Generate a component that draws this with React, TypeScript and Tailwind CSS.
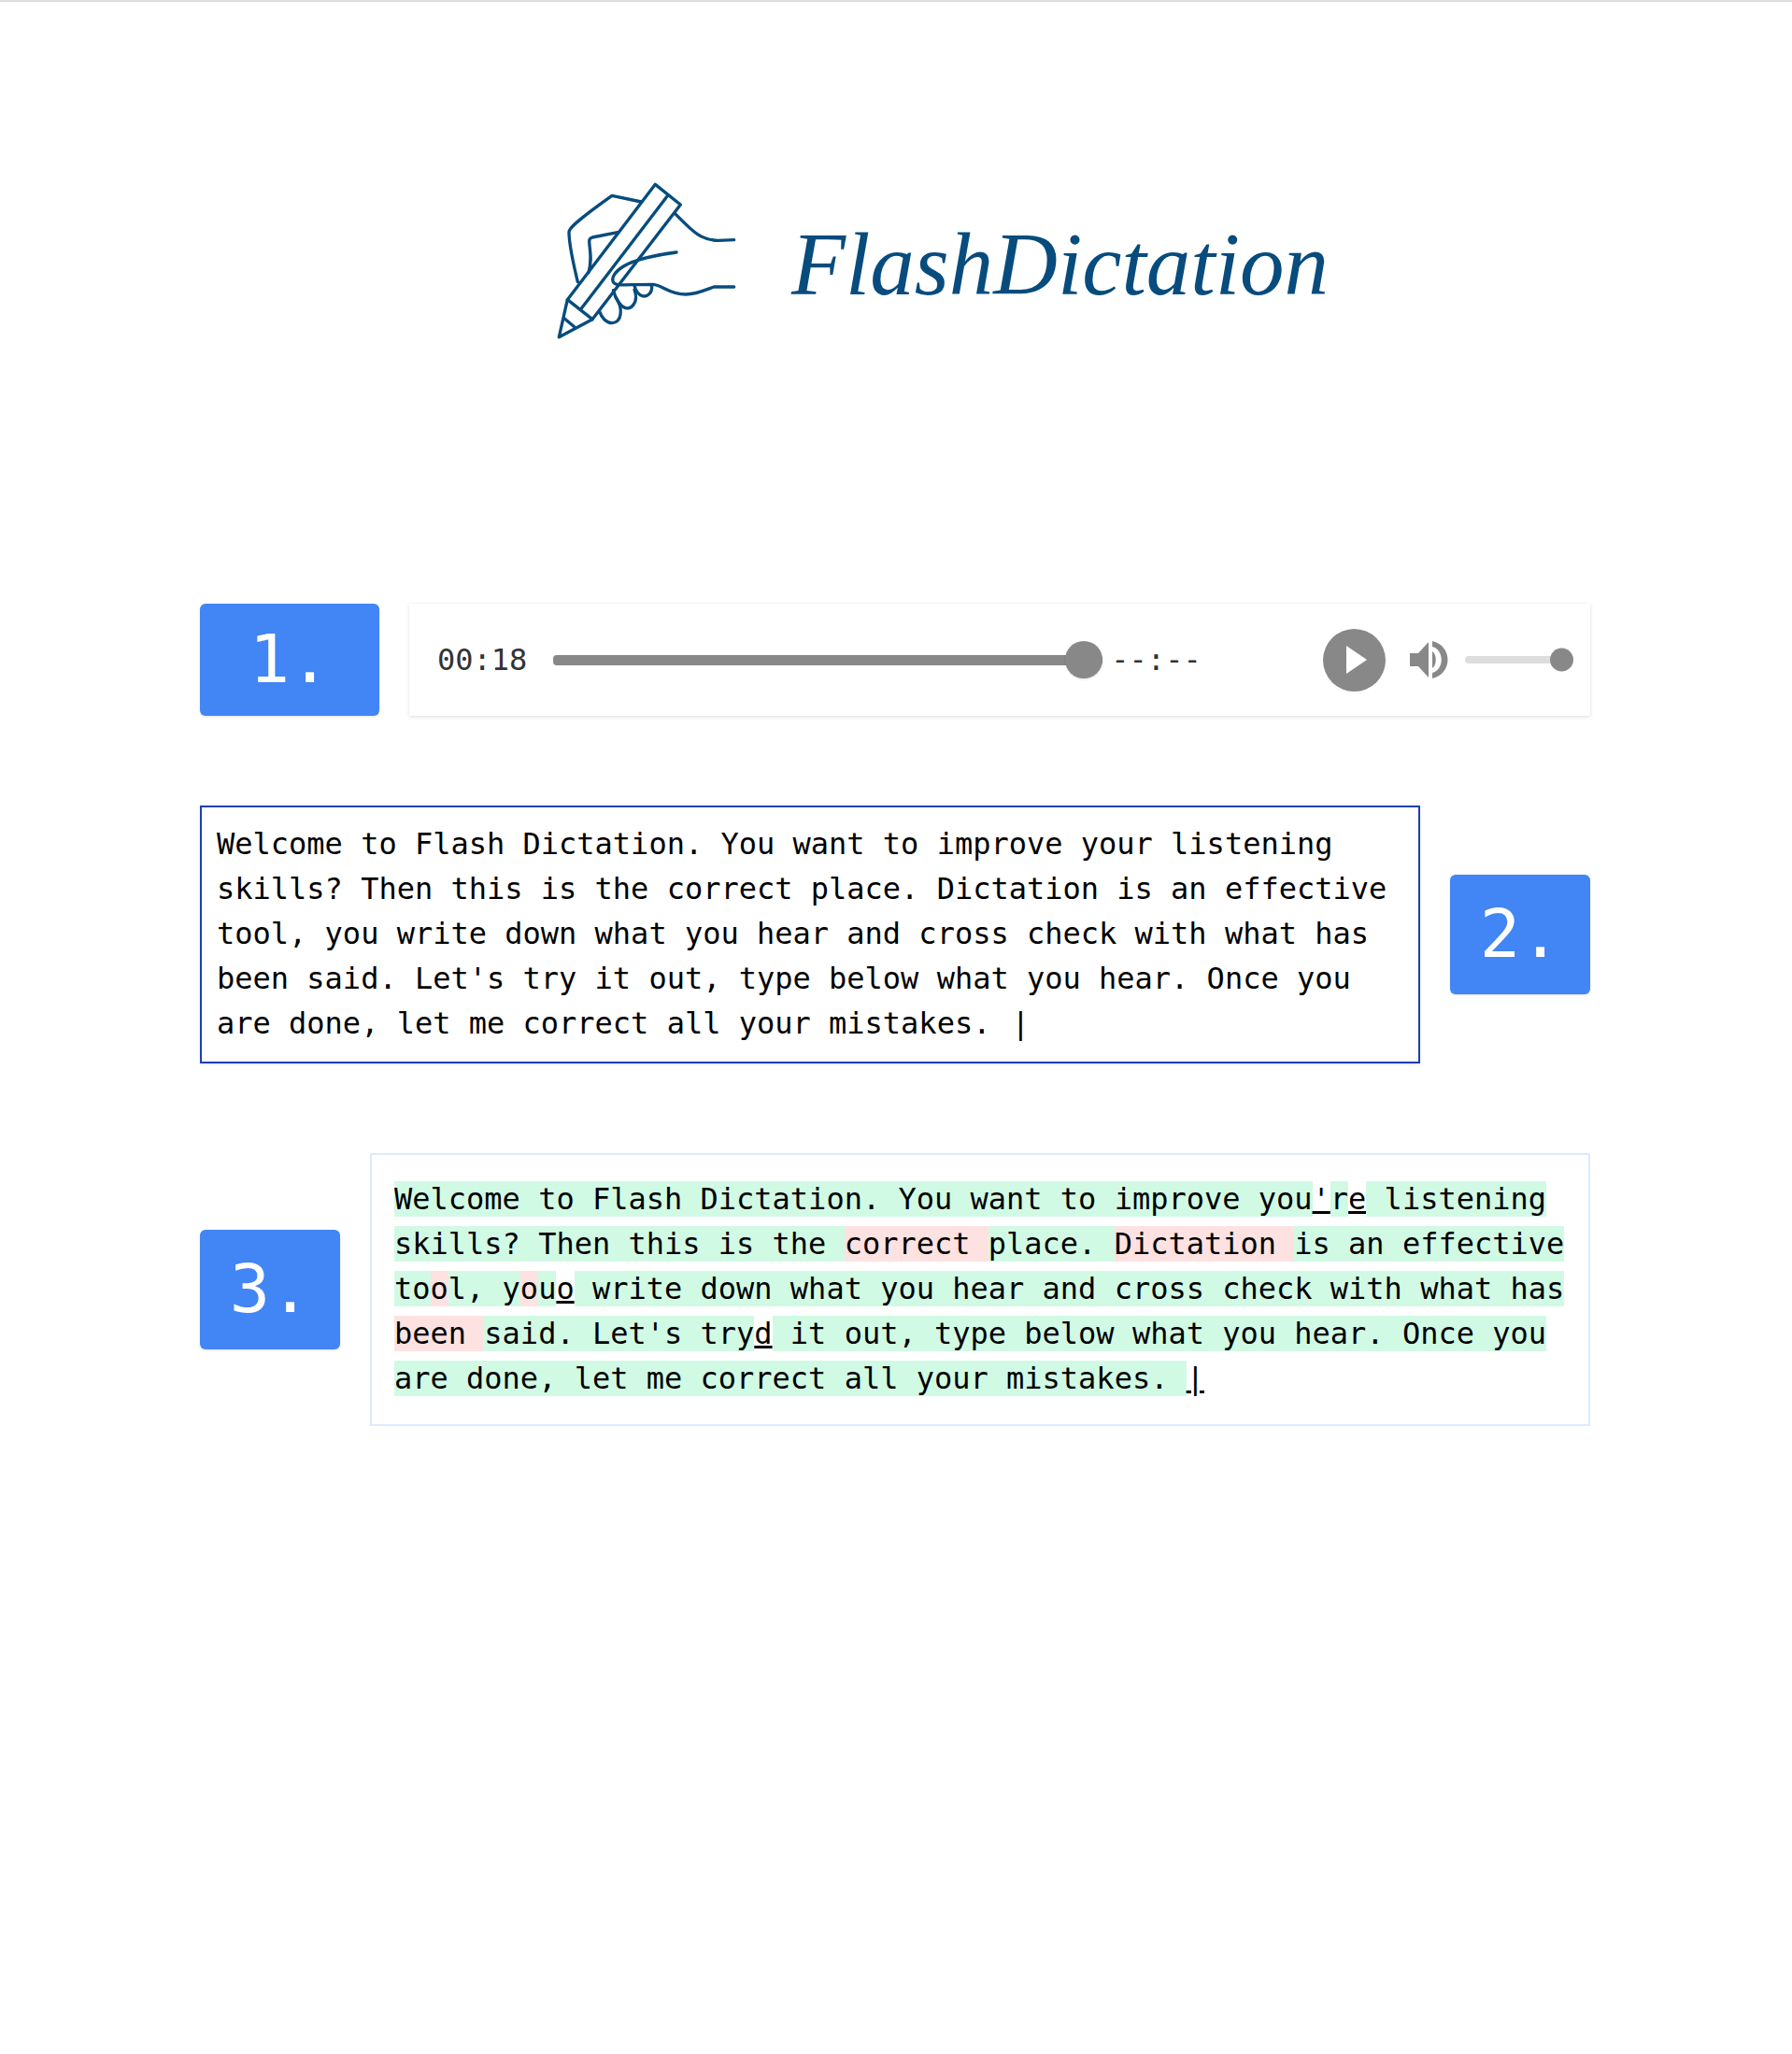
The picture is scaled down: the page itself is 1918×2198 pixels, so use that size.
const mono = "font-['DejaVu_Sans_Mono',monospace]";

function HandLogo() {
  return (
    <svg width="260" height="210" viewBox="0 0 780 630" fill="none" stroke="#074c7d" strokeWidth="10" strokeLinecap="round" strokeLinejoin="round" className="shrink-0">
      <path d="M88 572 L115 452 L397 82 L478 147 L195 515 Z" />
      <path d="M160 480 L437 118" />
      <path d="M115 452 L195 515" />
      <path d="M105 512 L138 540" />
      <path d="M148 395 C135 340 120 280 120 235 C120 222 150 195 258 118 L352 138" />
      <path d="M280 235 L195 252 C187 254 185 258 185 265 C187 300 195 320 183 365" />
      <path d="M460 175 C510 225 540 262 600 262 L650 260" />
      <path d="M465 300 C400 308 330 325 295 345 C270 360 255 380 262 395 C268 410 300 403 390 403 C420 405 440 435 495 435 C530 435 560 420 585 411 L650 411" />
      <path d="M385 405 C390 430 370 445 355 440 C345 437 335 425 330 407" />
      <path d="M330 420 C345 460 320 485 300 478 C285 473 270 450 262 422" />
      <path d="M270 445 C295 480 290 525 258 527 C240 527 225 510 218 490" />
    </svg>
  );
}

function Badge({ label, className }: { label: string; className: string }) {
  return (
    <div className={`flex items-center justify-center rounded-md bg-[#4285f4] text-7xl text-white shadow ${mono} ${className}`}>
      {label}
    </div>
  );
}

function Player() {
  return (
    <div className="flex h-[120px] flex-1 items-center bg-white pl-[30px] pr-[18px] text-[32px] text-[#333] shadow-[0_1px_4px_rgba(0,0,0,0.14)]">
      <span>00:18</span>
      <div className="relative ml-[28px] h-[11px] w-[588px] rounded bg-[#888]">
        <div className="absolute right-0 top-1/2 h-10 w-10 -translate-y-1/2 rounded-full bg-[#888] shadow" />
      </div>
      <span className="ml-[9px]">--:--</span>
      <button className="ml-auto flex h-[67px] w-[67px] items-center justify-center rounded-full bg-[#888]">
        <svg width="24" height="30" viewBox="0 0 24 30" className="ml-1">
          <path d="M1 0 L23 15 L1 30 Z" fill="#fff" />
        </svg>
      </button>
      <svg width="42" height="42" viewBox="0 0 42 42" className="ml-[26px]">
        <path d="M0 14 H9 L20 2 V40 L9 28 H0 Z" fill="#888" />
        <path d="M24 12 C29 15 29 27 24 30 Z" fill="#888" />
        <path d="M24 1 C46 6 46 36 24 41 V35 C37 32 37 10 24 7 Z" fill="#888" />
      </svg>
      <div className="relative ml-[17px] h-2 w-[116px] rounded bg-[#ddd]">
        <div className="absolute right-0 top-1/2 h-[25px] w-[25px] -translate-y-1/2 rounded-full bg-[#888]" />
      </div>
    </div>
  );
}

function Ok({ children }: { children: string }) {
  return <span className="bg-[#d1fae5]">{children}</span>;
}

function Bad({ children }: { children: string }) {
  return <span className="bg-[#fee2e2]">{children}</span>;
}

export default function App() {
  return (
    <div className={`min-h-[2198px] border-t-2 border-[#ddd] bg-white text-black ${mono}`}>
      <header className="flex items-center justify-center pl-[73px] pt-[168px]">
        <HandLogo />
        <h1 className="ml-[18px] mt-4 font-['Liberation_Serif',serif] text-[95px] italic leading-none text-[#074c7d]">
          FlashDictation
        </h1>
      </header>

      <main className="mx-auto mt-[266px] max-w-[1536px] pl-[23px] pr-[25px]">
        <section className="flex gap-8">
          <Badge label="1." className="w-48 pb-[3px]" />
          <Player />
        </section>

        <section className="mt-24 flex items-center gap-8">
          <div className="flex-1 border-2 border-[#1e40af] px-4 pb-[17px] pt-[15px] text-[32px] shadow">
            <span>Welcome to Flash Dictation. You want to improve your listening skills? Then this is the correct place. Dictation is an effective tool, you write down what you hear and cross check with what has been said. Let's try it out, type below what you hear. Once you are done, let me correct all your mistakes. </span>
            <span className="ml-[3px]">|</span>
          </div>
          <Badge label="2." className="w-[150px] pb-[29px] pt-[27px]" />
        </section>

        <section className="mt-24 flex items-center gap-8">
          <Badge label="3." className="w-[150px] pb-[29px] pt-[27px]" />
          <div className="flex-1 border-2 border-[#dbeafe] px-6 pb-[25px] pt-[23px] text-[32px]">
            <Ok>Welcome to Flash Dictation. You want to improve you</Ok>
            <u>'</u>
            <Ok>r</Ok>
            <u>e</u>
            <Ok> listening </Ok>
            <Ok>skills? Then this is the </Ok>
            <Bad>correct </Bad>
            <Ok>place. </Ok>
            <Bad>Dictation </Bad>
            <Ok>is an effective </Ok>
            <Ok>to</Ok>
            <Bad>o</Bad>
            <Ok>l, y</Ok>
            <Bad>o</Bad>
            <Ok>u</Ok>
            <u>o</u>
            <Ok> write down what you hear and cross check with what has </Ok>
            <Bad>been </Bad>
            <Ok>said. Let's try</Ok>
            <u>d</u>
            <Ok> it out, type below what you hear. Once you </Ok>
            <Ok>{"are done, let me correct all your mistakes.\u00a0"}</Ok>
            <u>|</u>
          </div>
        </section>
      </main>
    </div>
  );
}
